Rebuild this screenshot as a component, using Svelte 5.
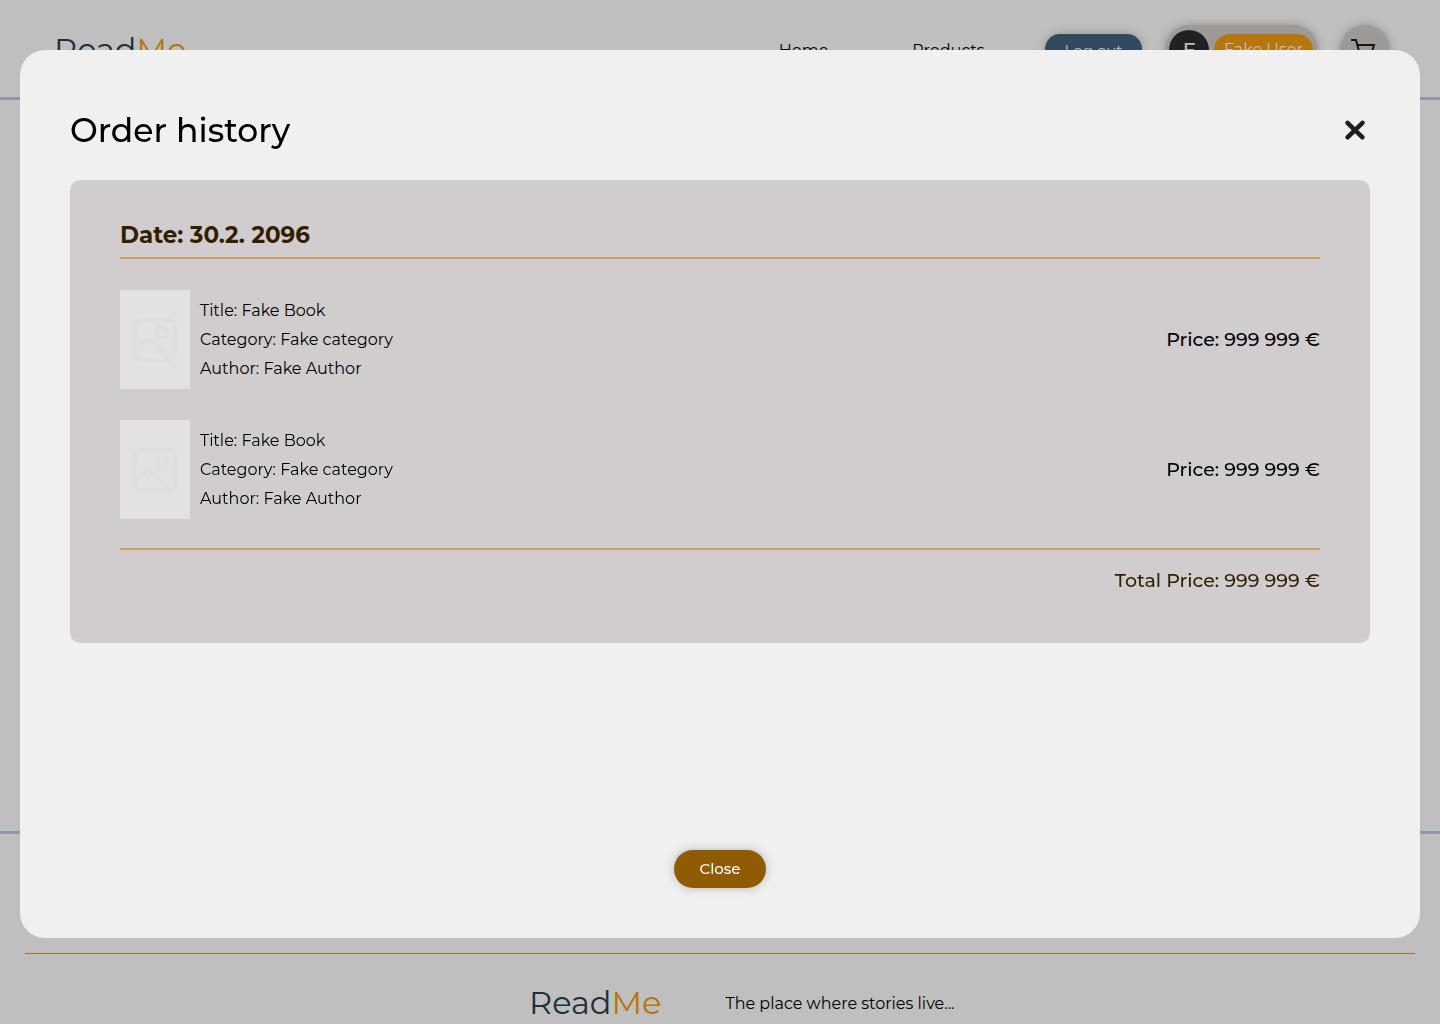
<script>
  const items = [
    { title: 'Fake Book', category: 'Fake category', author: 'Fake Author', price: '999 999 €' },
    { title: 'Fake Book', category: 'Fake category', author: 'Fake Author', price: '999 999 €' }
  ];
  let open = $state(true);
  const close = () => (open = false);
</script>

<div class="page">
  <header>
    <a class="logo" href="#home">Read<span>Me</span></a>
    <div class="tools">
      <nav>
        <a href="#home">Home</a>
        <a href="#products">Products</a>
        <button class="logout">Log out</button>
      </nav>
      <a class="user" href="#profile">
        <span class="avatar">F</span>
        <span class="name">Fake User</span>
      </a>
      <button class="cart" aria-label="Cart">
        <svg viewBox="0 0 28 26" fill="none" stroke="currentColor" stroke-width="2">
          <path d="M0 3h5l4 15h12" />
          <path d="M6 8h17l-2.500 8H8" />
          <circle cx="10" cy="22" r="2" />
          <circle cx="19" cy="22" r="2" />
        </svg>
      </button>
    </div>
  </header>
  <main></main>
  <footer>
    <div class="about">
      <a class="logo" href="#home">Read<span>Me</span></a>
      <p>The place where stories live...</p>
    </div>
  </footer>
</div>

{#if open}
  <div class="overlay">
    <div class="modal" role="dialog" aria-modal="true" aria-labelledby="dialog-title">
      <div class="head">
        <h1 id="dialog-title">Order history</h1>
        <button class="dismiss" aria-label="Dismiss" onclick={close}>
          <svg viewBox="0 0 30 30" fill="none" stroke="currentColor" stroke-width="4.500" stroke-linecap="round">
            <path d="M7.500 7.800l15 14.500M22.500 7.800l-15 14.500" />
          </svg>
        </button>
      </div>
      <section class="order">
        <h2>Date: 30.2. 2096</h2>
        <ul>
          {#each items as item}
            <li>
              <div class="cover">
                <svg viewBox="0 0 44 44" fill="none" stroke="currentColor" stroke-width="3.500" stroke-linejoin="round">
                  <rect x="2" y="2" width="40" height="40" rx="5" />
                  <circle cx="29" cy="14.500" r="5.500" />
                  <path d="M2 33l13-12.500L36 41" />
                </svg>
              </div>
              <div class="info">
                <p>Title: {item.title}</p>
                <p>Category: {item.category}</p>
                <p>Author: {item.author}</p>
              </div>
              <p class="price">Price: {item.price}</p>
            </li>
          {/each}
        </ul>
        <p class="total">Total Price: 999 999 €</p>
      </section>
      <button class="close" onclick={close}>Close</button>
    </div>
  </div>
{/if}

<style>
  :global(body) {
    margin: 0;
    background: #fff;
    color: #000;
    font-family: Montserrat, Inter, 'Open Sans', sans-serif;
    font-size: 16px;
  }
  h1, h2, p, ul { margin: 0; padding: 0; }
  a { color: inherit; text-decoration: none; }
  button { border: 0; padding: 0; font: inherit; cursor: pointer; }
  svg { display: block; }

  .page {
    display: flex;
    flex-direction: column;
    height: 100vh;
    overflow: hidden;
  }
  header {
    display: flex;
    align-items: center;
    justify-content: space-between;
    box-sizing: border-box;
    height: 100px;
    flex-shrink: 0;
    padding: 3px 50px 0 54px;
    border-bottom: 3px solid #bccde4;
  }
  .logo { font-size: 32px; line-height: 40px; font-weight: 400; color: #2c3e50; }
  .logo span { color: #f39c12; }
  .tools { display: flex; align-items: center; gap: 22px; }
  nav {
    display: grid;
    grid-template-columns: repeat(3, 145px);
    align-items: center;
    justify-items: center;
    margin-right: -23px;
  }
  .logout {
    width: 97px;
    height: 32px;
    border-radius: 15px;
    background: #456280;
    color: #fff;
    font-size: 15px;
    box-shadow: 0 0 10px rgba(0, 0, 0, 0.25);
  }
  .user {
    display: flex;
    align-items: center;
    gap: 5px;
    height: 50px;
    padding: 0 5px 0 4px;
    border-radius: 25px;
    background: #d0cdca;
    box-shadow: 0 0 10px rgba(0, 0, 0, 0.25);
  }
  .avatar {
    width: 40px;
    height: 40px;
    border-radius: 50%;
    background: #2c2c2c;
    color: #fff;
    font-size: 20px;
    font-weight: 500;
    line-height: 40px;
    text-align: center;
  }
  .name {
    width: 99px;
    height: 32px;
    border-radius: 16px;
    background: #f39c12;
    color: #fff;
    line-height: 32px;
    text-align: center;
  }
  .cart {
    display: grid;
    place-items: center;
    width: 50px;
    height: 50px;
    border-radius: 50%;
    background: #d0cdca;
    color: #1c1c1c;
    box-shadow: 0 0 10px rgba(0, 0, 0, 0.25);
  }
  .cart svg { width: 28px; height: 26px; }
  main { flex: 1; }
  footer {
    box-sizing: border-box;
    height: 193px;
    flex-shrink: 0;
    padding: 119px 25px 0;
    border-top: 3px solid #bccde4;
  }
  .about {
    display: flex;
    align-items: center;
    gap: 64px;
    padding: 29px 0 0 504px;
    border-top: 1px solid #e6961c;
  }

  .overlay {
    position: fixed;
    inset: 0;
    display: flex;
    padding: 50px 20px 86px;
    background: rgba(0, 0, 0, 0.25);
  }
  .modal {
    flex: 1;
    display: flex;
    flex-direction: column;
    box-sizing: border-box;
    padding: 50px;
    border-radius: 25px;
    background: #f0f0f0;
    overflow: auto;
  }
  .head {
    display: flex;
    align-items: center;
    justify-content: space-between;
    height: 60px;
    margin-bottom: 20px;
  }
  h1 { font-size: 33px; line-height: 40px; font-weight: 500; }
  .dismiss { width: 30px; height: 30px; background: none; color: #1e1e1e; }
  .order {
    padding: 40px 50px 50px;
    border-radius: 10px;
    background: #d1cdce;
  }
  h2 {
    padding-bottom: 7px;
    border-bottom: 2px solid #cb9f5e;
    color: #331f00;
    font-size: 23px;
    line-height: 30px;
    font-weight: 700;
  }
  ul {
    display: grid;
    gap: 31px;
    padding: 31px 0 29px;
    list-style: none;
  }
  li { display: flex; align-items: center; gap: 10px; }
  .cover {
    display: grid;
    place-items: center;
    width: 70px;
    height: 99px;
    background: #e2e2e2;
    color: #dedede;
  }
  .cover svg { width: 44px; height: 44px; }
  .info { flex: 1; line-height: 29px; }
  .price, .total { font-size: 19px; line-height: 24px; font-weight: 500; }
  .total {
    padding-top: 19px;
    border-top: 2px solid #cb9f5e;
    color: #331f00;
    text-align: right;
  }
  .close {
    flex-shrink: 0;
    width: 92px;
    height: 38px;
    margin: auto auto 0;
    padding-bottom: 2px;
    border-radius: 19px;
    background: #8f5b05;
    color: #fff;
    font-size: 15px;
    font-weight: 500;
    box-shadow: 0 0 10px rgba(0, 0, 0, 0.25);
  }
</style>
